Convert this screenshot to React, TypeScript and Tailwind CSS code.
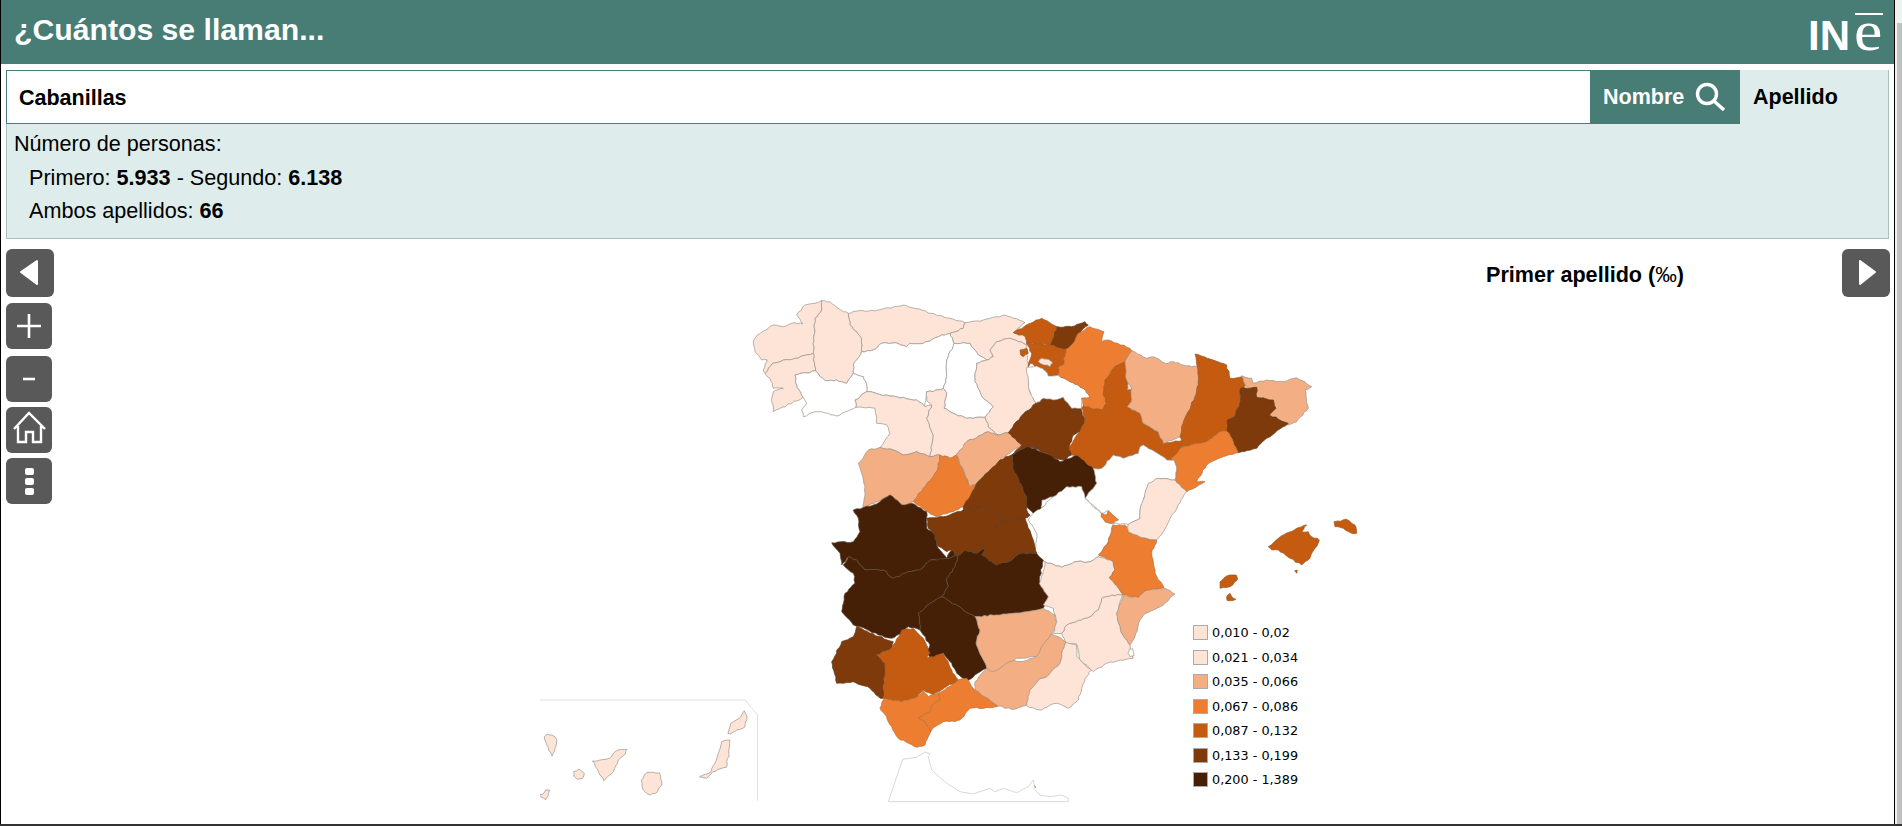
import React from "react";

const LIGHT = "#fde4d6";
const PEACH = "#f4ae84";
const ORANGE = "#ed7d31";
const RUST = "#c55a11";
const BROWN = "#7f3a0b";
const DARK = "#452006";
const WHITE = "#ffffff";

type Frame = { ox: number; oy: number; sx: number; sy: number };
const frames: Record<string, Frame> = {
  a: { ox: 750, oy: 310, sx: 3, sy: 3 },
  b: { ox: 1030, oy: 310, sx: 3, sy: 3 },
  c: { ox: 820, oy: 490, sx: 3, sy: 3 },
  d: { ox: 1000, oy: 490, sx: 3, sy: 3 },
  e: { ox: 820, oy: 620, sx: 3, sy: 3 },
  f: { ox: 520, oy: 680, sx: 2.8, sy: 3 },
};

function hash(a: number, b: number): number {
  const v = Math.sin(a * 12.9898 + b * 78.233) * 43758.5453;
  return v - Math.floor(v) - 0.5;
}

// parses "frame:x,y x,y ..." and adds a small rough edge, the same on both sides of a shared border
function pts(s: string, rough = true): string {
  let cur = frames.a;
  const list: [number, number][] = s
    .trim()
    .split(/\s+/)
    .map((tok) => {
      let t = tok;
      if (t.includes(":")) {
        const [k, rest] = t.split(":");
        cur = frames[k];
        t = rest;
      }
      const [x, y] = t.split(",").map(Number);
      return [cur.ox + x / cur.sx, cur.oy + y / cur.sy];
    });
  const out: string[] = [];
  const n = list.length;
  for (let i = 0; i < n; i++) {
    const p = list[i];
    const q = list[(i + 1) % n];
    out.push(`${p[0].toFixed(1)},${p[1].toFixed(1)}`);
    if (!rough) continue;
    const forward = p[0] < q[0] || (p[0] === q[0] && p[1] < q[1]);
    const [u, v] = forward ? [p, q] : [q, p];
    const len = Math.hypot(v[0] - u[0], v[1] - u[1]);
    const steps = Math.floor(len / 3.5);
    if (steps < 1) continue;
    const mids: string[] = [];
    for (let k = 1; k <= steps; k++) {
      const r = k / (steps + 1);
      const nx = -(v[1] - u[1]) / len;
      const ny = (v[0] - u[0]) / len;
      const amp = 1.5 * hash(u[0] + k, v[1] - k);
      mids.push(
        `${(u[0] + (v[0] - u[0]) * r + nx * amp).toFixed(1)},${(u[1] + (v[1] - u[1]) * r + ny * amp).toFixed(1)}`
      );
    }
    if (!forward) mids.reverse();
    out.push(...mids);
  }
  return out.join(" ");
}

const provinces: [string, string][] = [
  [LIGHT, "a:10,95 22,75 70,45 100,50 135,38 158,42 140,15 165,-15 195,-20 215,-28 215,0 195,25 190,130 135,145 100,150 68,160 45,190 40,180 52,150 35,150 15,125"],
  [LIGHT, "a:45,190 68,160 100,150 135,145 190,130 197,183 135,195 140,225 160,262 70,305 65,265 70,245 100,235 70,235 60,205"],
  [LIGHT, "a:215,-28 240,-25 280,5 295,10 300,45 335,85 335,125 310,165 310,190 290,220 260,210 225,212 197,183 190,130 195,25 215,0"],
  [LIGHT, "a:295,10 309,5 384,0 462,-15 544,10 600,25 645,38 640,55 600,70 575,75 520,100 480,100 470,110 435,98 395,100 370,120 335,125 335,85 300,45"],
  [LIGHT, "a:645,38 700,30 765,15 825,38 790,68 825,78 830,105 780,85 740,95 720,120 730,140 710,150 685,135 660,100 612,100 600,70 640,55"],
  [WHITE, "a:310,190 310,165 335,125 370,120 395,100 435,98 470,110 480,100 520,100 575,75 600,70 612,100 590,150 590,200 580,235 550,245 530,245 525,290 500,270 420,258 350,245 350,225 340,200"],
  [WHITE, "a:612,100 660,100 685,135 710,150 680,160 675,215 700,265 730,290 705,322 650,325 610,310 582,295 590,250 580,235 590,200 590,150"],
  [LIGHT, "a:680,160 710,150 730,140 720,120 740,95 780,85 830,105 835,170 838,240 858,280 812,320 775,368 745,375 715,350 705,322 730,290 700,265 675,215"],
  [WHITE, "a:135,195 197,183 225,212 260,210 290,220 310,190 340,200 350,225 350,245 315,270 318,292 260,318 235,310 195,305 160,320 155,300 170,280 160,262 140,225"],
  [LIGHT, "a:315,270 350,245 420,258 500,270 525,290 545,285 530,325 550,375 540,440 500,425 460,435 430,420 390,412 420,370 410,345 380,340 375,295 318,292"],
  [LIGHT, "a:530,245 550,245 580,235 590,250 582,295 610,310 650,325 705,322 715,350 745,375 715,365 650,395 640,420 600,445 570,435 540,440 550,375 530,325 545,285 530,270"],
  [PEACH, "a:390,412 430,420 460,435 500,425 540,440 570,435 565,470 555,490 520,535 490,575 460,590 420,555 380,575 340,595 345,530 335,490 325,460 355,420"],
  [ORANGE, "a:570,435 600,445 620,435 660,530 680,520 665,550 640,590 610,605 560,620 525,600 490,575 520,535 555,490 565,470"],
  [PEACH, "a:620,435 650,395 715,365 745,375 775,368 815,405 790,420 750,450 700,500 680,520 660,530"],
  [BROWN, "a:775,368 812,320 858,280 b:40,265 70,270 100,262 125,295 150,290 165,330 150,365 130,375 118,410 125,435 100,450 70,445 50,430 0,410 a:870,415 830,410 785,435 815,405"],
  [DARK, "a:785,435 830,410 870,415 b:0,410 20,420 60,435 90,455 140,435 190,475 200,520 165,565 155,530 110,530 70,560 35,570 35,600 c:640,70 620,50 a:830,560 790,480"],
  [RUST, "a:790,68 822,50 858,30 b:35,25 82,50 62,105 45,102 15,100 a:850,100 830,100 825,78"],
  [BROWN, "b:82,50 125,50 165,35 175,45 145,70 130,100 108,118 62,105"],
  [RUST, "a:830,100 855,100 b:62,105 108,118 100,165 85,172 85,195 55,198 45,182 20,168 0,160 a:835,170 845,130"],
  [RUST, "a:810,120 830,115 835,130 820,140 812,135"],
  [LIGHT, "b:25,155 35,145 55,148 68,158 60,170 42,165"],
  [WHITE, "b:-10,172 20,168 45,182 55,198 85,195 120,215 160,235 180,262 155,265 155,295 125,295 100,262 70,270 40,265 30,275 18,279 a:838,240"],
  [ORANGE, "b:180,50 222,65 215,95 235,90 300,115 305,122 285,155 250,175 225,210 220,250 230,280 215,300 190,298 160,287 155,265 180,262 160,235 120,215 85,195 85,172 100,165 108,118 130,100 145,70"],
  [RUST, "b:285,155 290,210 305,235 305,270 292,290 330,310 340,340 385,365 400,400 455,392 458,410 420,450 410,450 375,425 340,405 330,410 325,430 280,445 250,435 215,475 190,475 140,435 125,435 118,410 150,365 165,330 155,295 160,287 190,298 215,300 230,280 220,250 225,210 250,175"],
  [LIGHT, "b:295,218 305,215 305,240 292,240"],
  [PEACH, "b:305,122 350,145 370,140 405,160 430,155 460,165 502,170 505,215 495,260 455,350 450,380 400,400 385,365 340,340 330,310 292,290 305,270 305,235 290,210 285,155"],
  [RUST, "b:495,132 550,150 590,165 600,205 635,200 650,225 630,240 630,280 615,320 592,330 595,365 570,365 530,395 458,410 455,392 450,380 455,350 495,260 505,215 502,170"],
  [PEACH, "b:635,197 665,205 670,220 710,210 760,215 800,203 825,215 845,230 825,240 835,295 800,335 775,345 745,330 718,315 738,295 730,270 680,262 680,235 650,232"],
  [BROWN, "b:632,235 680,232 680,262 730,270 738,295 718,315 775,340 710,385 680,415 625,428 610,395 592,365 592,330 615,320 630,280"],
  [ORANGE, "b:458,410 530,395 570,365 592,365 610,395 625,428 580,440 530,465 500,515 525,515 470,545 435,510 440,480 432,450 420,450"],
  [WHITE, "b:190,475 215,475 250,435 280,445 325,430 330,410 340,405 375,425 410,450 432,450 440,480 435,510 385,505 355,525 d:420,60 420,85 385,103 340,100 355,90 325,62 305,70 b:165,565 200,520"],
  [WHITE, "b:165,565 d:305,72 315,95 340,100 325,155 295,200 270,215 225,215 185,232 135,215 105,190 110,130 85,90 100,70 120,58 b:70,560 110,530 155,530"],
  [BROWN, "a:680,520 700,500 750,450 785,435 790,480 830,560 830,600 c:630,75 615,85 550,95 525,112 555,80 480,50 430,60 a:640,590 665,550"],
  [BROWN, "c:320,85 370,80 430,60 480,50 555,80 525,112 550,95 615,85 640,150 650,190 600,190 575,210 530,225 500,210 485,195 495,175 470,190 435,180 410,200 395,180 380,185 350,165 345,135 325,115"],
  [DARK, "c:100,60 160,45 210,15 245,45 275,40 320,65 320,115 345,135 350,165 380,205 350,210 330,210 300,240 265,245 220,265 190,240 135,240 110,210 85,200 65,225 60,190 35,158 100,155 120,125 115,85"],
  [DARK, "c:70,225 85,200 110,210 135,240 190,240 220,265 265,245 300,240 330,210 380,205 415,195 405,230 380,265 385,290 365,320 330,340 295,370 300,420 265,410 245,430 215,445 175,435 120,410 100,405 65,365 75,310 105,280 100,250"],
  [DARK, "c:380,205 395,180 410,200 435,180 470,190 495,175 485,195 530,225 575,210 600,190 650,190 670,210 658,270 685,320 670,355 620,365 580,370 530,375 465,380 390,335 365,320 385,290 380,265 405,230 415,195"],
  [DARK, "c:295,370 330,340 365,320 390,335 465,380 480,420 468,460 500,535 440,572 410,550 395,520 370,490 330,505 320,490 330,465 300,420"],
  [BROWN, "e:110,20 150,40 220,65 215,85 170,105 195,130 190,235 180,235 150,205 100,185 50,190 35,125 65,65 100,50"],
  [RUST, "e:170,105 215,85 245,30 280,25 310,55 330,100 320,115 370,100 395,150 415,180 340,225 310,210 290,232 245,245 190,235 195,130"],
  [ORANGE, "e:180,265 192,237 245,245 290,232 310,212 325,230 355,220 360,240 335,255 330,275 295,295 315,305 332,335 325,350 315,375 290,382 265,370 235,355 215,320 205,305 200,290"],
  [ORANGE, "e:355,220 415,180 440,175 465,210 535,258 520,262 450,265 425,295 405,305 370,305 345,320 332,335 315,305 295,295 330,275 335,255 360,240"],
  [PEACH, "e:465,185 500,145 570,120 600,125 640,115 655,85 695,40 738,65 725,100 720,130 680,170 655,180 635,215 628,255 575,268 535,258 465,210"],
  [PEACH, "c:465,380 530,375 580,370 620,365 670,355 705,375 712,405 695,430 665,470 650,500 590,505 570,515 520,545 500,535 468,460 480,420"],
  [LIGHT, "e:738,65 770,75 770,110 795,135 815,150 795,175 775,240 745,265 710,250 690,255 665,270 620,258 630,210 655,180 680,170 720,130 725,100"],
  [LIGHT, "d:185,430 200,405 270,380 295,360 305,325 335,315 368,315 350,370 365,430 390,465 400,505 360,510 320,520 280,545 240,510 230,462 200,458"],
  [WHITE, "d:388,478 398,476 402,498 390,500 384,490"],
  [PEACH, "d:370,318 415,322 440,300 495,295 525,312 490,345 430,375 415,405 405,440 390,465 365,430 350,370"],
  [LIGHT, "d:135,215 185,232 225,215 270,215 295,200 340,215 345,240 328,262 370,315 335,315 305,325 295,360 270,380 200,405 185,430 160,430 170,395 160,355 130,345 145,320 118,280 130,245"],
  [ORANGE, "d:340,105 375,105 385,125 410,135 440,145 470,150 455,190 465,250 492,293 440,300 415,322 370,315 328,262 345,240 340,215 295,195 325,155"],
  [LIGHT, "d:385,103 420,85 420,60 445,-20 475,-35 525,-30 560,5 520,70 490,125 470,150 440,145 410,135 385,125"],
  [ORANGE, "d:305,70 320,75 325,62 355,90 335,100 315,95 303,80"],
  [RUST, "d:805,170 850,135 890,115 920,105 905,125 925,125 935,140 958,150 945,175 925,210 905,225 870,205 835,180 815,180"],
  [RUST, "d:1002,95 1040,88 1065,105 1070,130 1055,130 1030,115 1005,110"],
  [RUST, "d:660,275 680,258 708,255 712,270 690,290 660,295"],
  [RUST, "d:680,320 690,310 700,325 708,328 690,332 682,332"],
  [RUST, "d:884,242 892,240 890,250"],
  [LIGHT, "f:68,170 75,163 95,168 103,180 98,205 90,228 80,210"],
  [LIGHT, "f:203,243 250,235 270,212 300,208 295,222 275,240 262,275 235,302 220,275"],
  [LIGHT, "f:150,275 165,267 180,280 175,295 160,298 150,288"],
  [LIGHT, "f:48,342 65,342 72,330 83,330 78,350 72,360 60,352"],
  [LIGHT, "f:340,300 355,278 390,278 397,315 385,335 365,345 345,330"],
  [LIGHT, "f:503,290 535,275 550,240 565,185 588,180 585,220 578,262 540,275 522,295"],
  [LIGHT, "f:582,160 590,130 615,115 628,92 636,110 630,140 600,155 590,162"],
];

const legend: [string, string][] = [
  [LIGHT, "0,010 - 0,02"],
  [LIGHT, "0,021 - 0,034"],
  [PEACH, "0,035 - 0,066"],
  [ORANGE, "0,067 - 0,086"],
  [RUST, "0,087 - 0,132"],
  [BROWN, "0,133 - 0,199"],
  [DARK, "0,200 - 1,389"],
];

function strokeFor(fill: string): string {
  if (fill === DARK) return "#5e4a3a";
  if (fill === BROWN) return "#5c3a1e";
  if (fill === RUST) return "#9a5a28";
  if (fill === ORANGE) return "#b4713c";
  return "#9a948c";
}

function MapSvg() {
  return (
    <svg viewBox="540 290 880 530" width={880} height={530} className="block">
      <polyline
        points={pts("f:52,60 630,60 665,105 665,362", false)}
        fill="none"
        stroke="#dfdfdf"
        strokeWidth="1"
      />
      <polygon
        points={pts(
          "e:205,545 248,418 290,412 315,396 330,402 325,410 335,450 380,490 420,515 460,522 510,505 525,515 550,505 590,518 625,500 640,480 645,510 660,525 690,530 725,525 745,535 745,545",
          false
        )}
        fill="#ffffff"
        stroke="#d9d9d9"
        strokeWidth="1"
      />
      <polygon points={pts("e:642,495 648,500 647,505", false)} fill={RUST} />
      {provinces.map(([fill, p], i) => (
        <polygon
          key={i}
          points={pts(p)}
          fill={fill}
          stroke={strokeFor(fill)}
          strokeWidth="0.7"
          strokeLinejoin="round"
        />
      ))}
    </svg>
  );
}

function Btn({ children, big }: { children: React.ReactNode; big?: boolean }) {
  return (
    <div
      className={
        big
          ? "w-[48px] h-[48px] rounded-[6px] bg-[#595959] flex items-center justify-center shrink-0"
          : "w-[46px] h-[46px] rounded-[6px] bg-[#595959] flex items-center justify-center shrink-0"
      }
    >
      {children}
    </div>
  );
}

export default function App() {
  return (
    <div
      className="w-[1902px] h-[826px] overflow-hidden flex flex-col bg-white text-black"
      style={{ fontFamily: '"Liberation Sans", Arial, sans-serif' }}
    >
      <div className="flex h-[824px]">
        <div className="w-[1px] bg-black shrink-0" />
        <div className="w-[1893px] shrink-0 flex flex-col">
          <header className="h-[64px] bg-[#477d75] flex items-center justify-between pl-[13px] pr-[11px] shrink-0">
            <h1 className="text-[30.2px] font-bold text-white leading-[36px] pb-[4px]">
              ¿Cuántos se llaman...
            </h1>
            <div className="relative flex items-baseline text-white self-start h-[62px] w-[75px]">
              <span className="text-[42px] font-bold leading-[62px] mr-[4px]">IN</span>
              <span
                className="text-[56px] leading-[62px] origin-left scale-x-[1.14]"
                style={{ fontFamily: '"Liberation Serif", serif' }}
              >
                e
              </span>
              <div className="absolute right-0 top-[13px] w-[28px] h-[2px] bg-white" />
            </div>
          </header>

          <div className="mx-[5px] mt-[6px] flex h-[54px] shrink-0 border-y border-l border-[#477d75] w-[1883px]">
            <div className="flex-1 bg-white flex items-center pl-[12px] pt-[2px] text-[21.5px] font-bold">
              Cabanillas
            </div>
            <div className="w-[150px] bg-[#477d75] text-white flex items-center pl-[13px] text-[21.5px] font-bold -my-px">
              <span className="pt-[1px]">Nombre</span>
              <svg width="32" height="32" viewBox="0 0 32 32" className="ml-[10px]" fill="none">
                <circle cx="13" cy="13" r="9.5" stroke="#fff" strokeWidth="3.4" />
                <path d="M20 20 L30 29" stroke="#fff" strokeWidth="3.4" />
              </svg>
            </div>
            <div className="w-[149px] bg-[#deedeb] flex items-center pl-[13px] pt-[1px] text-[21.5px] font-bold border-r border-[#a9c2be] -my-px">
              Apellido
            </div>
          </div>

          <div className="mx-[5px] w-[1883px] h-[115px] shrink-0 bg-[#deedeb] border-x border-b border-[#a9c2be] text-[21.6px] leading-[33.5px] pt-[3px]">
            <div className="pl-[7px]">Número de personas:</div>
            <div className="pl-[22px]">
              Primero: <b>5.933</b> - Segundo: <b>6.138</b>
            </div>
            <div className="pl-[22px]">
              Ambos apellidos: <b>66</b>
            </div>
          </div>

          <div className="flex flex-1 min-h-0 pl-[5px] pt-[10px] w-[1889px]">
            <div className="flex flex-col w-[48px] shrink-0">
              <Btn big>
                <svg width="24" height="30" viewBox="0 0 24 30">
                  <path d="M3 14 L19 3 V26 Z" fill="#fff" stroke="#fff" strokeWidth="2" strokeLinejoin="round" />
                </svg>
              </Btn>
              <div className="mt-[6px]">
                <Btn>
                  <svg width="24" height="24" viewBox="0 0 24 24">
                    <path d="M0 12 H24 M12 0 V24" stroke="#fff" strokeWidth="2.6" />
                  </svg>
                </Btn>
              </div>
              <div className="mt-[7px]">
                <Btn>
                  <svg width="12" height="4" viewBox="0 0 12 4">
                    <path d="M0 2 H12" stroke="#fff" strokeWidth="2.6" />
                  </svg>
                </Btn>
              </div>
              <div className="mt-[5px]">
                <Btn>
                  <svg width="46" height="46" viewBox="0 0 46 46" fill="none">
                    <path
                      d="M8 22 L23 6 L39 22 M12 19 V35 H20 V25 H27 V35 H35 V19"
                      stroke="#fff"
                      strokeWidth="2.4"
                    />
                  </svg>
                </Btn>
              </div>
              <div className="mt-[5px]">
                <Btn>
                  <div className="flex flex-col gap-[3px]">
                    <div className="w-[9px] h-[7px] rounded-[2px] bg-white" />
                    <div className="w-[9px] h-[7px] rounded-[2px] bg-white" />
                    <div className="w-[9px] h-[7px] rounded-[2px] bg-white" />
                  </div>
                </Btn>
              </div>
            </div>

            <div className="flex-1 flex flex-col min-w-0">
              <div className="self-end mr-[158px] mt-[14px] h-[24px] leading-[24px] text-[21.6px] font-bold whitespace-nowrap">
                Primer apellido (<span className="font-normal">‰</span>)
              </div>
              <div className="relative ml-[486px] mt-[3px] w-[880px] h-[530px]">
                <MapSvg />
                <div
                  className="absolute left-[653px] top-[335px] flex flex-col"
                  style={{ fontFamily: '"DejaVu Sans", sans-serif' }}
                >
                  {legend.map(([c, t]) => (
                    <div key={t} className="flex items-start h-[24.5px]">
                      <div
                        className="w-[15px] h-[15px] border border-[#aaaaaa]"
                        style={{ backgroundColor: c }}
                      />
                      <span className="ml-[4px] text-[12.8px] leading-[15px] whitespace-nowrap">{t}</span>
                    </div>
                  ))}
                </div>
              </div>
            </div>

            <Btn big>
              <svg width="24" height="30" viewBox="0 0 24 30">
                <path d="M6 3 L21 14 L6 26 Z" fill="#fff" stroke="#fff" strokeWidth="2" strokeLinejoin="round" />
              </svg>
            </Btn>
          </div>
        </div>
        <div className="w-[1px] bg-black shrink-0" />
        <div className="flex-1 bg-[#f1f1f1] pt-[23px] pl-[2px]">
          <div className="h-full bg-[#c1c1c1]" />
        </div>
      </div>
      <div className="h-[2px] bg-[#333333] shrink-0" />
    </div>
  );
}
